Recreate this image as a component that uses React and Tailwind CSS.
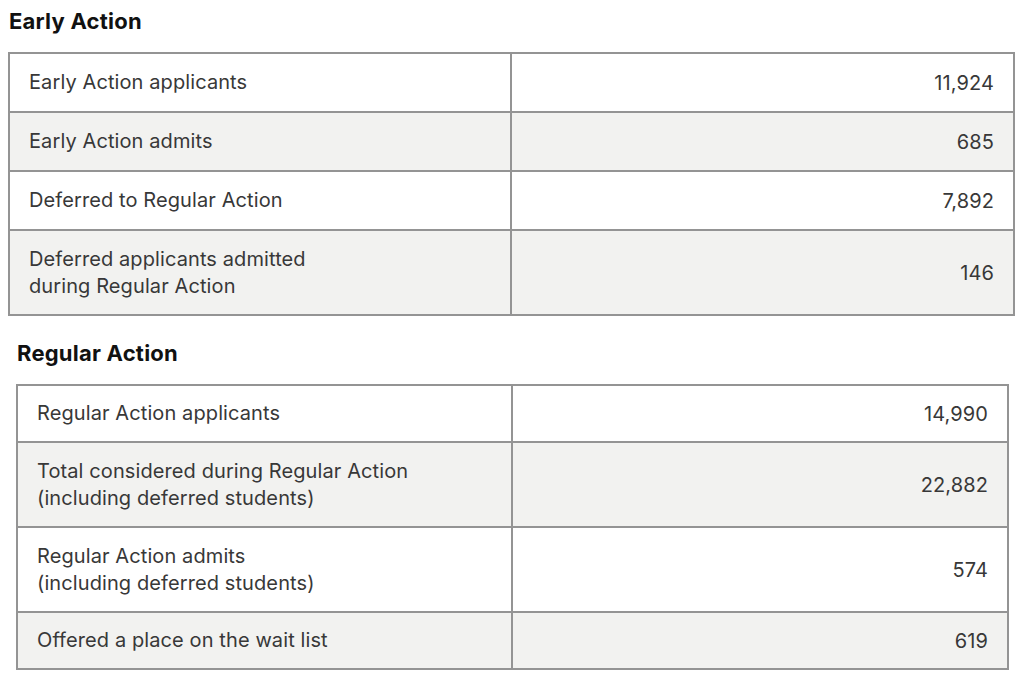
import React from "react";

const early = [
  { label: ["Early Action applicants"], value: "11,924" },
  { label: ["Early Action admits"], value: "685" },
  { label: ["Deferred to Regular Action"], value: "7,892" },
  { label: ["Deferred applicants admitted", "during Regular Action"], value: "146" },
];

const regular = [
  { label: ["Regular Action applicants"], value: "14,990" },
  { label: ["Total considered during Regular Action", "(including deferred students)"], value: "22,882" },
  { label: ["Regular Action admits", "(including deferred students)"], value: "574" },
  { label: ["Offered a place on the wait list"], value: "619" },
];

function Table({ rows, col1, single, double }) {
  return (
    <div className="border-2 border-[#949494] bg-white">
      {rows.map((r, i) => (
        <div
          key={i}
          className={
            "flex " +
            (i > 0 ? "border-t-2 border-[#949494] " : "") +
            (i % 2 === 1 ? "bg-[#f2f2f0]" : "bg-white")
          }
        >
          <div
            className={
              "shrink-0 border-r-2 border-[#949494] pl-[19px] pr-4 flex flex-col justify-center " +
              col1 +
              " " +
              (r.label.length > 1 ? double : single)
            }
          >
            {r.label.map((l, j) => (
              <div key={j} className="leading-[27px]">{l}</div>
            ))}
          </div>
          <div className="flex-1 flex items-center justify-end pr-[19px]">{r.value}</div>
        </div>
      ))}
    </div>
  );
}

export default function App() {
  return (
    <div
      className="w-[1024px] h-[680px] bg-white text-[#383838] text-[20px] tracking-[0.005em]"
      style={{ fontFamily: "Inter, 'Liberation Sans', sans-serif" }}
    >
      <div className="pl-[9px] pt-[7px] h-[52px] text-[22px] font-bold text-[#111] leading-[28px] tracking-[0.01em]">
        Early Action
      </div>
      <div className="pl-[8px] w-[1015px]">
        <Table rows={early} col1="w-[502px]" single="h-[57px]" double="h-[83px]" />
      </div>
      <div className="pl-[17px] pt-[23px] h-[68px] text-[22px] font-bold text-[#111] leading-[28px] tracking-[0.01em]">
        Regular Action
      </div>
      <div className="pl-[16px] w-[1009px]">
        <Table rows={regular} col1="w-[495px]" single="h-[55px]" double="h-[83px]" />
      </div>
    </div>
  );
}
